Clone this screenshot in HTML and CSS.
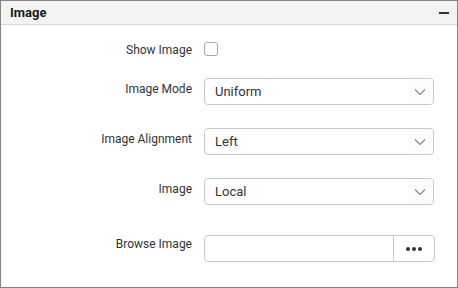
FILE: index.html
```html
<!DOCTYPE html>
<html>
<head>
<meta charset="utf-8">
<link rel="stylesheet" href="styles.css">
</head>
<body>
<div class="panel">
  <div class="header">
    <span class="title">Image</span>
    <span class="collapse"></span>
  </div>
  <div class="body">
    <div class="row row-check">
      <label class="label">Show Image</label>
      <div class="field"><span class="checkbox"></span></div>
    </div>
    <div class="row row-mode">
      <label class="label">Image Mode</label>
      <div class="field select"><span class="value">Uniform</span><span class="arrow"><svg width="12" height="8" viewBox="0 0 12 8"><path d="M1 1.5 L6 6.5 L11 1.5" fill="none" stroke="#7a8896" stroke-width="1.2"/></svg></span></div>
    </div>
    <div class="row row-align">
      <label class="label">Image Alignment</label>
      <div class="field select"><span class="value">Left</span><span class="arrow"><svg width="12" height="8" viewBox="0 0 12 8"><path d="M1 1.5 L6 6.5 L11 1.5" fill="none" stroke="#7a8896" stroke-width="1.2"/></svg></span></div>
    </div>
    <div class="row row-image">
      <label class="label">Image</label>
      <div class="field select"><span class="value">Local</span><span class="arrow"><svg width="12" height="8" viewBox="0 0 12 8"><path d="M1 1.5 L6 6.5 L11 1.5" fill="none" stroke="#7a8896" stroke-width="1.2"/></svg></span></div>
    </div>
    <div class="row row-browse">
      <label class="label">Browse Image</label>
      <div class="field browse"><span class="input"></span><span class="btn"><i></i><i></i><i></i></span></div>
    </div>
  </div>
</div>
</body>
</html>
```
FILE: styles.css
```css
html, body { margin: 0; padding: 0; background: #fff; }
body { font-family: Roboto, "Noto Sans", sans-serif; color: #333; }
.panel {
  width: 456px; height: 286px;
  border: 1px solid #828282;
  background: #fff;
}
.header {
  height: 23px;
  background: #f3f3f3;
  border-bottom: 1px solid #d4d4d4;
  display: flex; align-items: center; justify-content: space-between;
  padding: 0 8px 0 9px;
}
.title { font-size: 13px; font-weight: bold; color: #1a1a1a; }
.collapse { width: 10px; height: 2px; background: #333; }
.body { padding-top: 17px; }
.row { display: grid; grid-template-columns: 191px 230px; column-gap: 12px; }
.label { font-size: 12px; text-align: right; color: #333; line-height: 14px; }
.row-check { height: 14px; }
.row-check .label { padding-top: 1px; }
.checkbox {
  display: block; width: 12px; height: 12px;
  border: 1px solid #a6a6a6; border-radius: 3px;
}
.row-mode { margin-top: 22px; }
.row-align, .row-image { margin-top: 23px; }
.row-browse { margin-top: 30px; }
.row-mode .label, .row-align .label, .row-image .label { padding-top: 4px; }
.row-browse .label { padding-top: 2px; }
.select {
  height: 25px;
  border: 1px solid #c8c8c8; border-radius: 4px;
  display: flex; align-items: center;
  font-size: 13px;
}
.select .value { flex: 1; padding-left: 10px; color: #333; }
.select .arrow {
  width: 23px; align-self: stretch;
  display: flex; align-items: center; justify-content: center;
  background: #fcfcfc; border-radius: 0 4px 4px 0;
  padding-right: 2px;
}
.browse {
  height: 25px; width: 229px;
  border: 1px solid #c8c8c8; border-radius: 4px;
  display: flex;
}
.browse .input { flex: 1; }
.browse .btn {
  width: 40px; border-left: 1px solid #c8c8c8;
  display: flex; align-items: center; justify-content: center; gap: 2px;
}
.browse .btn i { width: 4px; height: 4px; border-radius: 50%; background: #333; display: block; }
```
